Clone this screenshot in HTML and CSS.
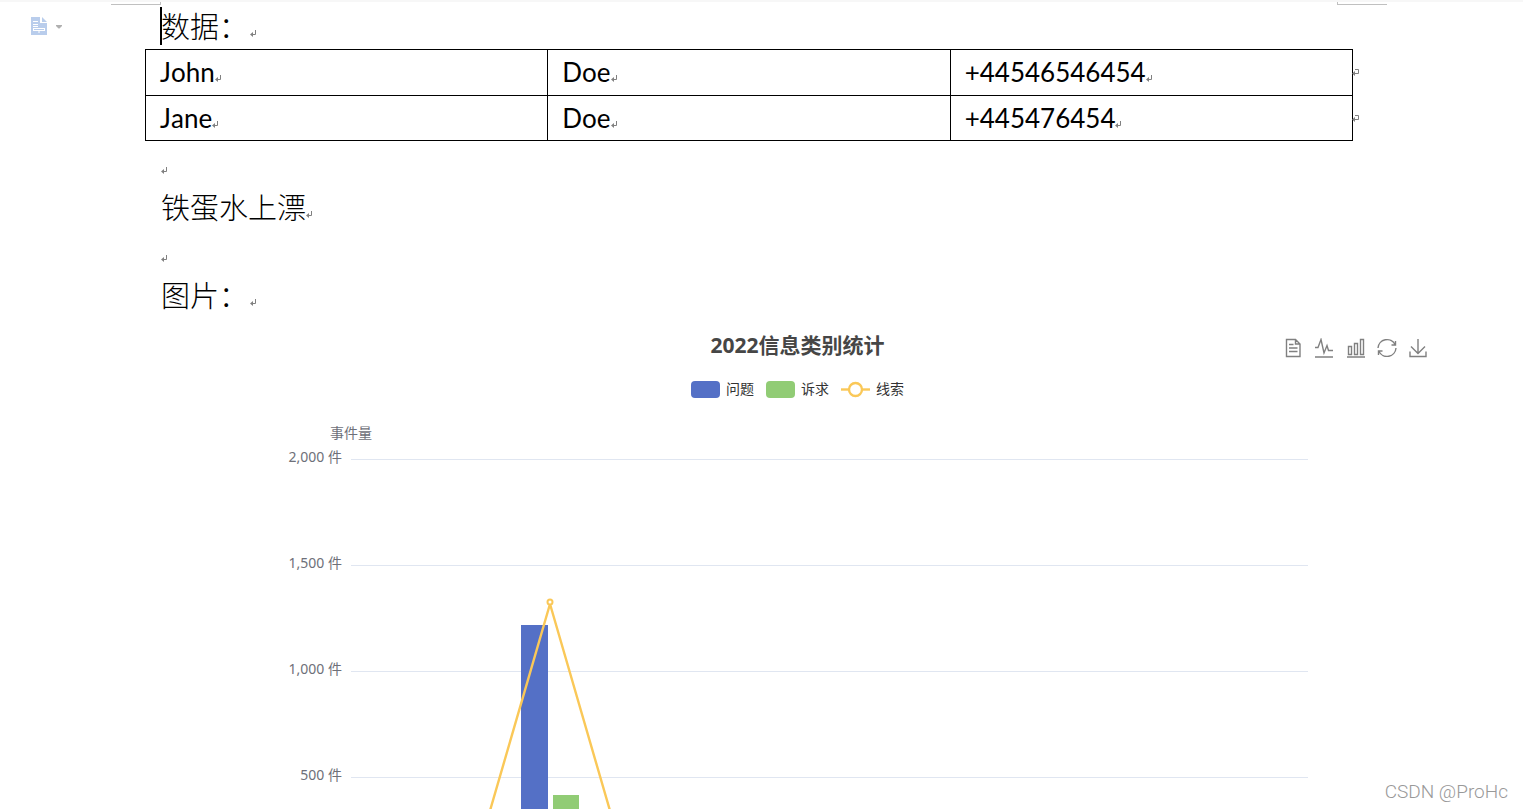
FILE: index.html
```
<!DOCTYPE html>
<html lang="zh-CN">
<head>
<meta charset="utf-8">
<title>数据</title>
<link rel="stylesheet" href="styles.css">
</head>
<body>
<svg class="defs" aria-hidden="true">
  <symbol id="mark" viewBox="0 0 7 7"><path d="M5.5 0V4.5H2" fill="none" stroke="#808080"/><path d="M0 4.5L3 2V7Z" fill="#808080"/></symbol>
  <symbol id="rowmark" viewBox="0 0 7 7"><path d="M3 .5H6.500V4.500H2" fill="none" stroke="#808080"/><path d="M0 4.500L3 2V7Z" fill="#808080"/></symbol>
</svg>
<button class="doc-menu" type="button" aria-label="文档">
  <svg width="32" height="18" viewBox="0 0 32 18">
    <path d="M0 0H9V6H16V18H0Z" fill="#b9cdec"/><path d="M11 0L16 5H11Z" fill="#b9cdec"/>
    <path d="M2 4.500H7M2 7.500H7M2 9.500H7M2 11.500H14M2 13.500H14M8 14V16M2.500 11V14M13.500 11V14" fill="none" stroke="#fff"/>
    <path d="M25 8H31V9L28.500 11.500H27.500L25 9Z" fill="#b0b0b0"/>
  </svg>
</button>
<main class="page">
  <div class="corners"><span class="corner left"></span><span class="corner right"></span></div>
  <p class="line first"><span class="cursor"></span>数据：<svg class="mark after-colon"><use href="#mark"/></svg></p>
  <table class="people">
    <tr>
      <td>John<svg class="mark"><use href="#mark"/></svg></td>
      <td>Doe<svg class="mark"><use href="#mark"/></svg></td>
      <td class="last">+44546546454<svg class="mark"><use href="#mark"/></svg><svg class="mark row-end"><use href="#rowmark"/></svg></td>
    </tr>
    <tr>
      <td>Jane<svg class="mark"><use href="#mark"/></svg></td>
      <td>Doe<svg class="mark"><use href="#mark"/></svg></td>
      <td class="last">+445476454<svg class="mark"><use href="#mark"/></svg><svg class="mark row-end"><use href="#rowmark"/></svg></td>
    </tr>
  </table>
  <p class="line"><svg class="mark"><use href="#mark"/></svg></p>
  <p class="line">铁蛋水上漂<svg class="mark"><use href="#mark"/></svg></p>
  <p class="line"><svg class="mark"><use href="#mark"/></svg></p>
  <p class="line">图片：<svg class="mark after-colon"><use href="#mark"/></svg></p>

  <section class="chart">
    <header class="chart-head">
      <h1 class="chart-title">2022信息类别统计</h1>
      <div class="tools">
        <button type="button" aria-label="数据视图"><svg width="20" height="20" viewBox="0 0 20 20"><path d="M2.500 1.500H11.500L16 6V18.500H2.500ZM11.500 1.500V6H16M5 6.500H9.500M5 10H13.500M5 13.500H13.500"/></svg></button>
        <button type="button" aria-label="折线图"><svg width="20" height="20" viewBox="0 0 20 20"><path d="M0 9.500H3L6 1.500L9 15L12 7.500L13.500 12.500H18M0 19H18"/></svg></button>
        <button type="button" aria-label="柱状图"><svg width="20" height="20" viewBox="0 0 20 20"><path d="M2.500 8.500H5.500V16.500H2.500ZM8.500 5.500H11.500V16.500H8.500ZM14.500 1.500H17.500V16.500H14.500ZM1 19H19"/></svg></button>
        <button type="button" aria-label="还原"><svg width="20" height="20" viewBox="0 0 20 20"><path d="M1 10A9 9 0 0 1 18 6.500M19 10A9 9 0 0 1 2 13.500M18.500 3V7H14.500M1.500 17V13H5.500"/></svg></button>
        <button type="button" aria-label="保存为图片"><svg width="20" height="20" viewBox="0 0 20 20"><path d="M10 1V15.500M3 8.500L10 15.500L17 8.500M2 13.500V18.500H18V13.500"/></svg></button>
      </div>
    </header>
    <ul class="legend">
      <li><span class="swatch blue"></span>问题</li>
      <li><span class="swatch green"></span>诉求</li>
      <li><svg width="29" height="17" viewBox="0 0 29 17"><path d="M0 8.500H29" stroke="#fac858" stroke-width="2.400"/><circle cx="14.500" cy="8.500" r="6.500" fill="#fff" stroke="#fac858" stroke-width="2.400"/></svg>线索</li>
    </ul>
    <div class="axis-name"><span>事件量</span></div>
    <div class="plot">
      <div class="tick"><span class="tick-label">2,000 件</span><span class="grid-line"></span></div>
      <div class="tick"><span class="tick-label">1,500 件</span><span class="grid-line"></span></div>
      <div class="tick"><span class="tick-label">1,000 件</span><span class="grid-line"></span></div>
      <div class="tick"><span class="tick-label">500 件</span><span class="grid-line"></span></div>
      <svg class="series" viewBox="0 0 957 424" preserveAspectRatio="none">
        <rect x="170" y="166" width="27" height="258" fill="#5470c6"/>
        <rect x="202" y="336" width="26" height="88" fill="#91cc75"/>
        <path d="M118 424L199 145L280 424" fill="none" stroke="#fac858" stroke-width="2.400"/>
        <circle cx="199" cy="143" r="2.500" fill="#fff" stroke="#fac858" stroke-width="2"/>
      </svg>
    </div>
  </section>
</main>
<div class="watermark">CSDN @ProHc</div>
</body>
</html>
```
FILE: styles.css
```
* { box-sizing: border-box; }
body {
  margin: 0;
  height: 100vh;
  overflow: hidden;
  position: relative;
  background: #fff;
  color: #000;
  font-family: "Noto Sans", "Noto Sans CJK SC", sans-serif;
}
.defs { position: absolute; width: 0; height: 0; }
button { border: 0; padding: 0; background: none; display: block; }
.doc-menu { position: absolute; left: 31px; top: 17px; }
.doc-menu svg { display: block; }

.page { height: 100%; overflow: hidden; border-top: 2px solid #f7f7f7; }
.corners {
  display: flex;
  justify-content: space-between;
  height: 3px;
  padding: 0 136px 0 111px;
}
.corner { width: 50px; border-bottom: 1px solid #c0c0c0; }
.corner.left { border-right: 1px solid #c0c0c0; }
.corner.right { border-left: 1px solid #c0c0c0; }

.line {
  display: flex;
  align-items: center;
  height: 44px;
  margin: 0 170px 0 161px;
  position: relative;
  font-family: "Noto Sans CJK SC", sans-serif;
  font-size: 29px;
  font-weight: 300;
  line-height: 42px;
  padding-bottom: 2px;
}
.line.first { padding-bottom: 4px; }
.cursor { position: absolute; left: -1px; top: 2px; width: 2px; height: 38px; background: #000; }
.mark { width: 7px; height: 7px; flex: none; }
.line .mark { margin-top: 16px; }
.line .after-colon { margin-left: 2px; }

.people {
  width: calc(100% - 315px);
  height: 92px;
  margin-left: 145px;
  border-collapse: collapse;
  table-layout: fixed;
  font-family: Lato, sans-serif;
  font-size: 26px;
  font-kerning: none;
  line-height: 44px;
}
.people td { border: 1px solid #000; padding: 0 14px; }
.people .last { position: relative; }
.row-end { position: absolute; right: -7px; top: 19px; }

.chart { margin: 0 89px 0 161px; }
.chart-head {
  display: grid;
  grid-template-columns: 1fr auto 1fr;
  align-items: center;
  height: 56px;
}
.chart-title {
  grid-column: 2;
  margin: 0;
  color: #464646;
  font-size: 21px;
  line-height: 28px;
}
.tools { display: flex; justify-content: flex-end; gap: 11px; padding: 6px 6px 0 0; }
.tools svg { display: block; fill: none; stroke: #808080; stroke-width: 1.4; }
.legend {
  display: flex;
  justify-content: center;
  gap: 12px;
  height: 32px;
  margin: 0;
  padding: 0;
  list-style: none;
  color: #333;
  font-size: 14px;
  line-height: 18px;
}
.legend li { display: flex; align-items: center; gap: 6px; }
.swatch { width: 29px; height: 17px; border-radius: 4px; }
.blue { background: #5470c6; }
.green { background: #91cc75; }
.axis-name {
  display: flex;
  height: 44px;
  padding: 18px 0 0 169px;
  color: #6e7079;
  font-size: 14px;
  line-height: 20px;
}
.plot { position: relative; padding-right: 126px; }
.tick { display: flex; gap: 9px; height: 106px; color: #6e7079; font-size: 14px; line-height: 16px; }
.tick-label { width: 181px; text-align: right; white-space: nowrap; }
.grid-line { flex: 1; height: 11px; border-bottom: 1px solid #e0e6f1; }
.series { position: absolute; left: 190px; top: 10px; width: calc(100% - 316px); height: 424px; }

.watermark {
  position: absolute;
  right: 15px;
  bottom: 6px;
  color: #999;
  font-family: Roboto, sans-serif;
  font-size: 19px;
  font-weight: 300;
  line-height: 22px;
}
```
